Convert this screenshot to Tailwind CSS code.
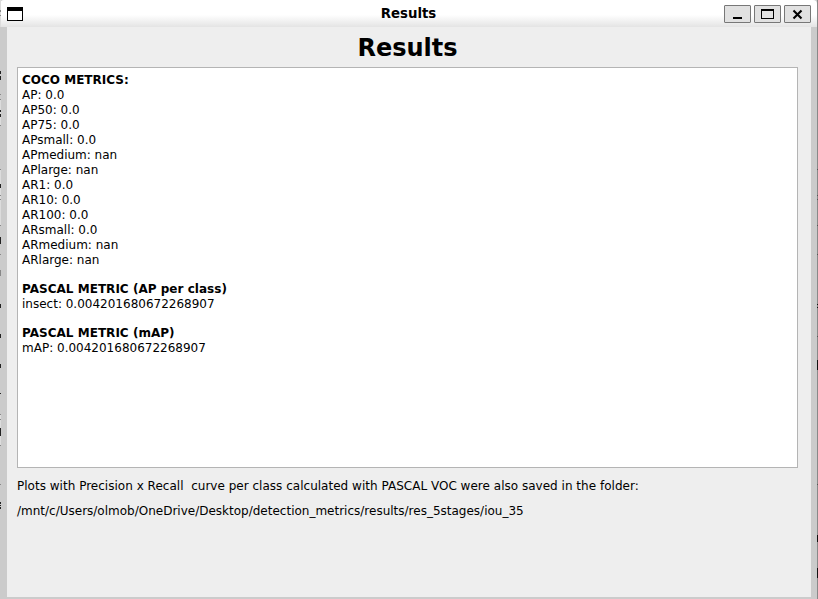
<!DOCTYPE html>
<html lang="en">
<head>
<meta charset="utf-8">
<title>Results</title>
<script src="https://cdn.jsdelivr.net/npm/@tailwindcss/browser@4"></script>
</head>
<body class="relative h-[599px] w-[818px] overflow-hidden bg-[#cbcbcb] font-['DejaVu_Sans',sans-serif] text-[12px] text-black">
<div class="flex h-[599px] w-[818px] flex-col border-r border-[#888888]">
  <header class="grid h-[27px] shrink-0 grid-cols-[1fr_auto_1fr] items-start rounded-t-[4px] bg-linear-to-b from-white from-55% to-[#e4e4e4]">
    <svg class="mt-[7px] ml-[7px]" width="16" height="14" shape-rendering="crispEdges"><path fill="#000" d="M0 0h16v14H0z"/><path fill="#fff" d="M1 4h14v9H1z"/></svg>
    <h1 class="pt-[6px] text-[13.33px] leading-4 font-bold">Results</h1>
    <div class="flex justify-end gap-[3px] pt-[5px] pr-[6px]">
      <button class="h-[18px] w-[27px] rounded-[1px] border border-[#777777] bg-[#e1e1e1]" aria-label="Minimize"><svg width="25" height="16" shape-rendering="crispEdges"><path d="M8 11h9v2H8z"/></svg></button>
      <button class="h-[18px] w-[27px] rounded-[1px] border border-[#777777] bg-[#e1e1e1]" aria-label="Maximize"><svg width="25" height="16" shape-rendering="crispEdges"><path fill-rule="evenodd" d="M6 3h13v10H6zM7 5v7h11V5z"/></svg></button>
      <button class="h-[18px] w-[27px] rounded-[1px] border border-[#777777] bg-[#e1e1e1]" aria-label="Close"><svg width="25" height="16"><path d="M8.5 4.5l8 8M16.5 4.5l-8 8" fill="none" stroke="#000" stroke-width="2.1"/></svg></button>
    </div>
  </header>
  <main class="mr-[6px] ml-[7px] h-[570px] bg-[#eeeeee] pr-[13px] pl-[10px]">
    <h2 class="h-10 pt-[5px] text-center text-[24px] leading-[33px] font-bold">Results</h2>
    <section class="h-[401px] border border-[#b4b4b4] bg-white px-1 pt-[5px] leading-[15px]">
      <p class="font-bold">COCO METRICS:</p>
      <p>AP: 0.0</p>
      <p>AP50: 0.0</p>
      <p>AP75: 0.0</p>
      <p>APsmall: 0.0</p>
      <p>APmedium: nan</p>
      <p>APlarge: nan</p>
      <p>AR1: 0.0</p>
      <p>AR10: 0.0</p>
      <p>AR100: 0.0</p>
      <p>ARsmall: 0.0</p>
      <p>ARmedium: nan</p>
      <p>ARlarge: nan</p>
      <p class="mt-[14px] font-bold tracking-[0.025px]">PASCAL METRIC (AP per class)</p>
      <p>insect: 0.004201680672268907</p>
      <p class="mt-[14px] font-bold tracking-[0.025px]">PASCAL METRIC (mAP)</p>
      <p>mAP: 0.004201680672268907</p>
    </section>
    <p class="mt-[11px] leading-[15px] tracking-[0.016px] whitespace-pre">Plots with Precision x Recall  curve per class calculated with PASCAL VOC were also saved in the folder:</p>
    <p class="mt-[10px] leading-[15px]">/mnt/c/Users/olmob/OneDrive/Desktop/detection_metrics/results/res_5stages/iou_35</p>
  </main>
</div>
<!-- Slivers of the window behind, visible along both edges -->
<svg class="pointer-events-none absolute inset-0" width="818" height="599" shape-rendering="crispEdges">
  <path fill="#dcdcdc" d="M0 0h1v27H0zM0 100h1v25H0zM0 170h1v55H0zM0 415h1v30H0z"/>
  <path fill="#888" d="M0 10h1v2H0zM0 15h1v1H0zM0 94h1v1H0zM0 99h1v1H0zM0 125h1v1H0zM0 169h1v1H0zM0 195h1v1H0zM0 199h1v1H0zM0 225h1v1H0zM0 254h1v1H0zM0 270h1v6H0zM0 414h1v1H0zM0 419h1v1H0zM0 445h1v1H0zM0 484h1v1H0z"/>
  <path fill="#222" d="M0 71h1v3H0zM0 76h1v4H0zM0 110h1v2H0zM0 114h1v3H0zM0 184h1v4H0zM0 237h1v7H0zM0 304h1v4H0zM0 334h1v4H0zM0 364h1v4H0zM0 393h1v1H0zM0 428h1v8H0zM0 502h1v2H0zM0 505h1v1H0zM0 507h1v2H0z"/>
  <path fill="#555" d="M817 169h1v1h-1zM817 195h1v1h-1zM817 199h1v1h-1zM817 225h1v1h-1zM817 254h1v1h-1zM817 336h1v1h-1zM817 484h1v1h-1z"/>
  <path fill="#111" d="M817 304h1v1h-1zM817 307h1v1h-1zM817 360h1v10h-1zM817 535h1v7h-1zM817 568h1v10h-1z"/>
</svg>
</body>
</html>
